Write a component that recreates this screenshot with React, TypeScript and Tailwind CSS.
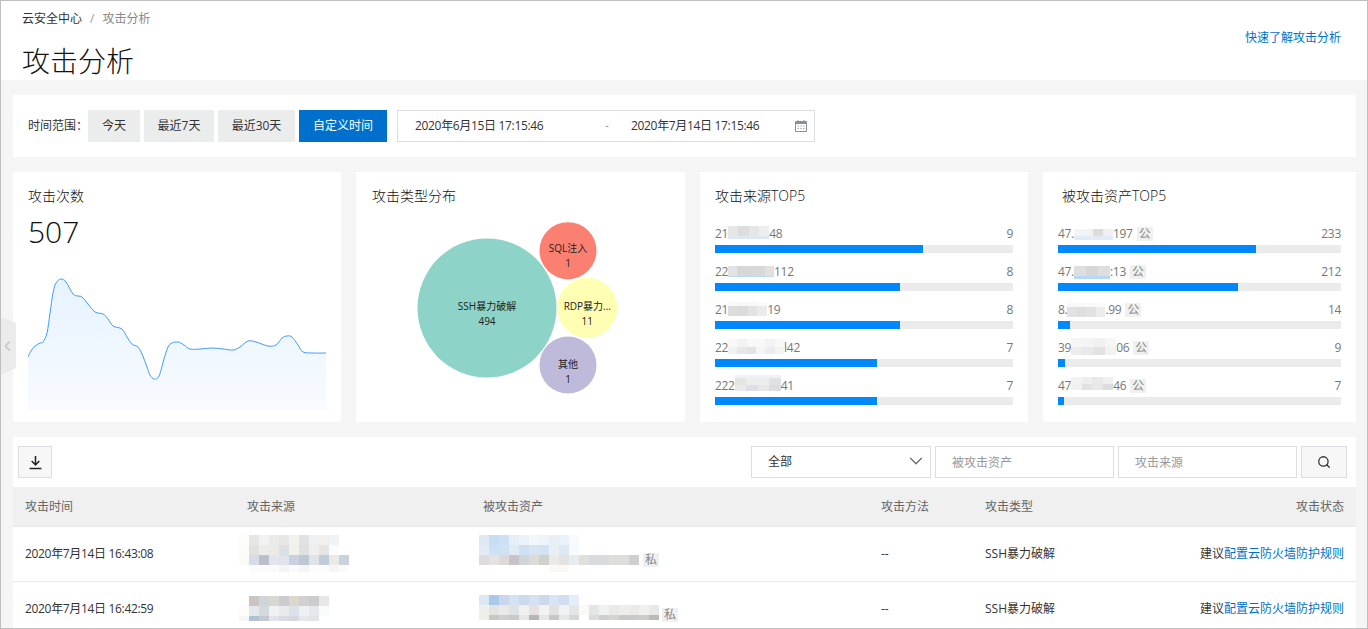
import React from "react";
import { ChevronDown, ChevronLeft, Search } from "lucide-react";

type MosaicRow = { h: number; cells: string[] };

function Mosaic({ rows, w = 10, dy = 0 }: { rows: MosaicRow[]; w?: number; dy?: number }) {
  return (
    <div className="flex flex-col shrink-0" style={{ transform: dy ? `translateY(${dy}px)` : undefined }}>
      {rows.map((r, i) => (
        <div key={i} className="flex">
          {r.cells.map((c, j) => (
            <div key={j} style={{ width: w, height: r.h, backgroundColor: "#" + c }} />
          ))}
        </div>
      ))}
    </div>
  );
}

const Tag = ({ text }: { text: string }) => (
  <span className="inline-flex h-[14px] w-4 shrink-0 items-center justify-center bg-[#f0f0f0] text-xs text-[#888]">{text}</span>
);

const sources = [
  {
    pre: "21", post: "48", n: 9, bar: 208, dy: -2, w: 10.25,
    rows: [
      { h: 10, cells: ["e7e6e6", "dedddd", "e6e6e6", "eeeeee"] },
      { h: 3, cells: ["dce8f4", "dce8f4", "dce8f4", "dce8f4"] },
    ],
  },
  {
    pre: "22", post: "112", n: 8, bar: 185, dy: -1, w: 9.2,
    rows: [
      { h: 10, cells: ["e3e3e3", "d9d7d6", "d6d8da", "dad8d7", "e3e0de"] },
      { h: 1, cells: ["bcdcf6", "bcdcf6", "bcdcf6", "bcdcf6", "bcdcf6"] },
    ],
  },
  {
    pre: "21", post: "19", n: 8, bar: 185, dy: -1, w: 9.75,
    rows: [
      { h: 4, cells: ["f9f9f9", "f6f6f6", "f8f8f8", "fbfbfb"] },
      { h: 10, cells: ["dcdcdc", "dbdbdb", "e2e2e2", "ebebeb"] },
    ],
  },
  {
    pre: "22", post: "l42", n: 7, bar: 162, dy: -2, w: 9.33,
    rows: [
      { h: 8, cells: ["f8f8f8", "f3f3f3", "f8f8f8", "f8f8f8", "f3f3f5", "f8f8f8"] },
      { h: 7, cells: ["f0f1f1", "e9e8e6", "e2e3e8", "f6f5f3", "ebecee", "f3f3f1"] },
    ],
  },
  {
    pre: "222", post: "41", n: 7, bar: 162, dy: -3, w: 11.5,
    rows: [
      { h: 3, cells: ["ecf2f7", "ecf2f7", "ecf2f7", "ecf2f7"] },
      { h: 7, cells: ["e5e5e5", "ebedef", "ededeb", "dfe1e5"] },
      { h: 6, cells: ["e8e9e9", "dfe0e5", "e8e8e6", "dcdcdf"] },
    ],
  },
];

const assets = [
  {
    pre: "47.", post: "197", n: 233, bar: 198, dy: 0, w: 9.75,
    rows: [
      { h: 7, cells: ["f4f4f4", "f2f2f2", "dcdcdc", "f0f0f0"] },
      { h: 4, cells: ["e0ebf7", "e0ebf7", "e0ebf7", "e0ebf7"] },
    ],
  },
  {
    pre: "47.", post: ":13", n: 212, bar: 180, dy: 0, w: 12,
    rows: [
      { h: 10, cells: ["dedede", "d6d6d6", "dedede"] },
      { h: 3, cells: ["b5d8fa", "b5d8fa", "b5d8fa"] },
    ],
  },
  {
    pre: "8.", post: ".99", n: 14, bar: 12, dy: 0, w: 9.5,
    rows: [
      { h: 4, cells: ["f8f8f8", "f9f9f9", "f9f9f9", "fbfbfb"] },
      { h: 10, cells: ["e2e2e2", "dedede", "e2e2e2", "ececec"] },
    ],
  },
  {
    pre: "39", post: "06", n: 9, bar: 7, dy: -2, w: 11.25,
    rows: [
      { h: 9, cells: ["f6f6f6", "f4f4f6", "f1f1f1", "f6f6f6"] },
      { h: 8, cells: ["ececec", "e8e8ea", "e2e2e2", "f2f2f2"] },
    ],
  },
  {
    pre: "47", post: "46", n: 7, bar: 6, dy: -3, w: 10.5,
    rows: [
      { h: 7, cells: ["f3f3f3", "eeeeee", "e8e8e8", "f0f0f0"] },
      { h: 6, cells: ["f0f2f2", "e2e2e2", "e8e8e8", "dcdcdc"] },
    ],
  },
];

const sourceMosaic1: MosaicRow[] = [
  { h: 10, cells: ["fdfdfb", "e5e7e5", "f2f2f2", "ebebe9", "e7e7e6", "f3f2ec", "e1e3e2", "eef0f2", "f1f0ec", "f1f2f5"] },
  { h: 10, cells: ["fcfbf8", "e0e2e2", "ebeded", "eceae6", "dde0e3", "f1f0e9", "dfe1e1", "eeeeee", "e6e5e3", "fbfcfd"] },
  { h: 10, cells: ["fafaf9", "d6dbe7", "b9c0cc", "e3e5ed", "e0e3ec", "c9d1de", "bfc7d3", "e1e3e8", "c0cbdb", "e9e9e6", "c9d2de"] },
  { h: 7, cells: ["ffffff", "fbfbfc", "fbfbfb", "fafafb", "f3f4f6", "fbfbfc", "f4f5f7", "fbfcfc", "fbfcfc", "f5f5f9", "fbfbfb"] },
];
const sourceMosaic2: MosaicRow[] = [
  { h: 10, cells: ["ffffff", "c9c6c2", "d1d4d8", "d9d7d1", "ccccce", "dbd7cc", "d0d0d2", "cccccf", "e7e7e7"] },
  { h: 10, cells: ["fdfdfc", "e3e8ec", "d4d9dd", "f0f1f5", "e9eaee", "dde2ea", "f0f0f4", "e7e8ec", "f9fafc"] },
  { h: 5, cells: ["f7f7f7", "afc2d4", "c3cad4", "e2e3ea", "d9dbe4", "d4d8e1", "e7e7ea", "e4e4e8", "ffffff"] },
];
const assetMosaic1: MosaicRow[] = [
  { h: 10, cells: ["dfe9f5", "c5def2", "cce2f4", "e8eef8", "edf2fa", "f3f6fb", "eef4fb", "e8eff7", "eaf1f9", "f7fbfe"] },
  { h: 10, cells: ["e2eaf4", "cbe1f4", "cfe2f3", "e0e9f4", "cfe0f2", "d7e5f3", "d2e2f2", "e8eff6", "dde8f4", "f7fbfe"] },
  { h: 10, cells: ["dfdadd", "e3e3e1", "dcd9d7", "c9c3c9", "d0d3d7", "dcdbda", "d0d0cc", "eceae6", "e2e4e2", "e9ecec", "e0dfdc", "d9dade", "d9dadc", "dfdedb", "dddddc", "cfcfd1"] },
  { h: 7, cells: ["ffffff", "ffffff", "ffffff", "ffffff", "ffffff", "ffffff", "ffffff", "faf9f6", "faf9f6"] },
];
const assetMosaic2: MosaicRow[] = [
  { h: 10, cells: ["dce7f4", "a8c9e8", "c9d7ec", "d4e2f3", "cbd9ec", "d5e1f3", "cbd9ec", "d7e4f4", "d1ddf0", "e4edf8"] },
  { h: 10, cells: ["eeefed", "e3e3e3", "e9e9e9", "dde2e5", "f0f0f0", "e6e1e1", "f1f2f4", "e3e0e0", "f1f2f4", "e6e7e5", "fafbf8", "e4e6e6", "f0f2f1", "e9e9e7", "eeedeb", "ebeae8", "f0f0ee", "e8e8e8"] },
  { h: 5, cells: ["eeefe6", "c7c7c7", "cfcecc", "cac9c9", "e7e6e6", "b5b5b5", "e4e6ea", "c8c7c7", "e5e7eb", "d6d7d5", "ffffff", "d8dce0", "cfd0ce", "d4d5d3", "c8c9c7", "c9cac8", "ccccca", "b9baba"] },
];

function smooth(pts: [number, number][]) {
  let d = `M${pts[0][0]} ${pts[0][1]}`;
  for (let i = 0; i < pts.length - 1; i++) {
    const p0 = pts[i - 1] || pts[i];
    const p1 = pts[i];
    const p2 = pts[i + 1];
    const p3 = pts[i + 2] || p2;
    const c1x = p1[0] + (p2[0] - p0[0]) / 6;
    const c1y = p1[1] + (p2[1] - p0[1]) / 6;
    const c2x = p2[0] - (p3[0] - p1[0]) / 6;
    const c2y = p2[1] - (p3[1] - p1[1]) / 6;
    d += ` C${c1x.toFixed(1)} ${c1y.toFixed(1)} ${c2x.toFixed(1)} ${c2y.toFixed(1)} ${p2[0]} ${p2[1]}`;
  }
  return d;
}

// trend line, read off the reference
const linePts: [number, number][] = [
  [0, 78], [3, 72], [7, 67], [12, 64], [15, 63], [19, 54], [22, 34], [25, 14], [28, 4], [33, 0], [38, 3], [45, 15], [50, 17], [54, 18],
  [60, 25], [67, 33], [75, 35], [80, 40], [85, 47], [94, 50], [99, 58], [104, 65], [110, 68], [114, 75], [119, 88],
  [122, 96], [126, 100], [131, 97], [136, 80], [140, 68], [144, 64], [150, 63], [156, 66], [162, 70], [172, 70], [185, 69],
  [195, 70], [205, 71], [212, 68], [220, 62], [228, 63], [240, 67], [248, 66], [254, 59], [259, 57], [264, 58], [270, 66], [275, 73],
  [285, 74], [298, 74],
];
const lineD = smooth(linePts);

function TopList({ items, tags = false }: { items: typeof sources; tags?: boolean }) {
  return (
    <div className="mt-[17px] flex flex-col gap-2">
      {items.map((it, i) => (
        <div key={i}>
          <div className="mt-px flex h-5 items-center text-xs text-[#777]">
            <span className="tracking-[-0.3px]">{it.pre}</span>
            <Mosaic rows={it.rows} w={it.w} dy={it.dy} />
            <span className="tracking-[-0.3px]">{it.post}</span>
            {tags && <span className="ml-1 flex"><Tag text="公" /></span>}
            <span className="ml-auto tracking-[-0.3px]">{it.n}</span>
          </div>
          <div className="mt-px h-2 bg-[#ebebeb]">
            <div className="h-2 bg-[#0088ff]" style={{ width: it.bar }} />
          </div>
        </div>
      ))}
    </div>
  );
}

export default function App() {
  return (
    <div className="relative flex h-[629px] w-[1368px] flex-col overflow-hidden border border-[#c0c0c0] bg-[#f5f5f5] font-['Open_Sans','Noto_Sans_CJK_SC',sans-serif] text-[#333]">
      {/* page head */}
      <div className="relative h-[79px] shrink-0 bg-white pl-[21px]">
        <div className="flex h-[35px] items-center text-xs">
          <span className="text-[#333]">云安全中心</span>
          <span className="mx-2 text-[#999]">/</span>
          <span className="text-[#888]">攻击分析</span>
        </div>
        <div className="mt-[7px] text-[28px] font-light leading-[36px] text-[#111]">攻击分析</div>
        <a className="absolute right-[26px] top-[29px] text-xs text-[#0070cc]">快速了解攻击分析</a>
      </div>

      <div className="flex flex-col gap-[15px] pl-3 pr-[11px] pt-[15px]">
        {/* time range */}
        <div className="flex h-[62px] items-center bg-white pl-[15px] text-xs">
          <span className="w-[60px]">时间范围：</span>
          <div className="flex gap-1">
            <button className="h-8 w-[52px] bg-[#ebecec]">今天</button>
            <button className="h-8 w-[70px] bg-[#ebecec]">最近7天</button>
            <button className="h-8 w-[77px] bg-[#ebecec]">最近30天</button>
            <button className="h-8 w-[88px] bg-[#0070cc] text-white">自定义时间</button>
          </div>
          <div className="relative ml-[10px] flex h-8 w-[418px] items-center border border-[#dcdee3] pl-[17px]">
            <span className="w-[190px] tracking-[-0.33px]">2020年6月15日 17:15:46</span>
            <span className="w-[26px] text-[#999]">-</span>
            <span className="tracking-[-0.33px]">2020年7月14日 17:15:46</span>
            <svg className="absolute left-[396px] top-[8px] h-[14px] w-[14px]" viewBox="0 0 14 14" fill="none">
              <path d="M1.5 2.5h11v10h-11z" stroke="#8a8f99" />
              <path d="M1.5 3h11v2h-11z" fill="#8a8f99" />
              <path d="M4 1v2M10 1v2" stroke="#8a8f99" />
              <path d="M3.5 7h1.5M6.3 7h1.5M9 7h1.5M3.5 9.5h1.5M6.3 9.5h1.5M9 9.5h1.5" stroke="#a4a8b0" />
            </svg>
          </div>
        </div>

        {/* summary cards */}
        <div className="flex h-[250px] gap-[15px]">
          <div className="flex w-[328px] flex-col bg-white px-[15px] pt-[14px]">
            <div className="h-5 text-sm font-light leading-5 text-[#111]">攻击次数</div>
            <div className="mt-[6px] h-10 text-[30px] font-light leading-10 text-[#111]">507</div>
            <svg className="h-[158px] w-[298px]" viewBox="0 0 298 158" fill="none">
              <defs>
                <linearGradient id="area" x1="0" y1="0" x2="0" y2="1">
                  <stop offset="0" stopColor="#e6f3ff" />
                  <stop offset="1" stopColor="#f8fbff" />
                </linearGradient>
              </defs>
              <g transform="translate(0 27)">
                <path d={lineD + " L298 131 L0 131 Z"} fill="url(#area)" />
                <path d={lineD} stroke="#3f9cfb" strokeWidth="1" />
              </g>
            </svg>
          </div>

          <div className="flex w-[329px] flex-col bg-white pt-[14px]">
            <div className="h-5 pl-4 text-sm font-light leading-5 text-[#111]">攻击类型分布</div>
            <svg className="h-[216px] w-[329px]" viewBox="0 0 329 216" fontSize="10" textAnchor="middle" fill="#222">
              <circle cx="131" cy="102" r="69.5" fill="#8dd3c7" />
              <circle cx="212" cy="44.7" r="28.5" fill="#fb8072" />
              <circle cx="231.3" cy="101.7" r="30" fill="#ffffb3" />
              <circle cx="212" cy="159" r="28.5" fill="#bebada" />
              <text x="131" y="104">SSH暴力破解</text>
              <text x="131" y="119">494</text>
              <text x="212" y="46">SQL注入</text>
              <text x="212" y="61">1</text>
              <text x="231.3" y="104">RDP暴力...</text>
              <text x="231.3" y="119">11</text>
              <text x="212" y="162">其他</text>
              <text x="212" y="177">1</text>
            </svg>
          </div>

          <div className="w-[328px] bg-white px-[15px] pt-[14px]">
            <div className="h-5 text-sm font-light leading-5 text-[#111]">攻击来源TOP5</div>
            <TopList items={sources} />
          </div>

          <div className="w-[313px] bg-white pl-[15px] pr-[15px] pt-[14px]">
            <div className="h-5 pl-1 text-sm font-light leading-5 text-[#111]">被攻击资产TOP5</div>
            <TopList items={assets} tags />
          </div>
        </div>

        {/* attack list */}
        <div className="bg-white text-xs">
          <div className="flex h-[50px] items-start pl-[5px] pr-[9px] pt-[9px]">
            <button className="flex h-8 w-[34px] items-center justify-center border border-[#dcdee3] bg-[#f7f7f7]">
              <svg className="h-[15px] w-[15px]" viewBox="0 0 14 14" fill="none" stroke="#222" strokeWidth="1.4">
                <path d="M7 1v8M3.4 5.6 7 9.2l3.6-3.6M1.5 12.6h11" />
              </svg>
            </button>
            <div className="relative ml-auto flex h-8 w-[180px] items-center border border-[#dcdee3] pl-4">
              <span>全部</span>
              <ChevronDown className="absolute right-[3px] top-[3px] text-[#666]" size={22} strokeWidth={1.3} />
            </div>
            <input className="ml-1 h-8 w-[179px] border border-[#dcdee3] pl-4 text-xs placeholder:text-[#999]" placeholder="被攻击资产" />
            <input className="ml-1 h-8 w-[179px] border border-[#dcdee3] pl-4 text-xs placeholder:text-[#999]" placeholder="攻击来源" />
            <button className="ml-1 flex h-8 w-[46px] items-center justify-center border border-[#dcdee3] bg-[#f7f7f7]">
              <Search size={14} strokeWidth={2.2} className="text-[#333]" />
            </button>
          </div>
          <table className="w-full table-fixed border-collapse">
            <colgroup>
              <col className="w-[222px]" />
              <col className="w-[236px]" />
              <col className="w-[398px]" />
              <col className="w-[104px]" />
              <col />
            </colgroup>
            <thead>
              <tr className="h-[39px] border-b border-[#e8e8e8] bg-[#f0f0f0] text-[#666]">
                <th className="pl-3 pt-[2px] text-left font-normal">攻击时间</th>
                <th className="pl-3 pt-[2px] text-left font-normal">攻击来源</th>
                <th className="pl-3 pt-[2px] text-left font-normal">被攻击资产</th>
                <th className="pl-3 pt-[2px] text-left font-normal">攻击方法</th>
                <th className="pl-3 pt-[2px] text-left font-normal">攻击类型</th>
                <th className="pr-3 pt-[2px] text-right font-normal">攻击状态</th>
              </tr>
            </thead>
            <tbody>
              <tr className="h-[55px] border-b border-[#e8e8e8]">
                <td className="pl-3 tracking-[-0.33px]">2020年7月14日 16:43:08</td>
                <td className="pl-1"><Mosaic rows={sourceMosaic1} /></td>
                <td className="pl-2">
                  <div className="flex items-start">
                    <Mosaic rows={assetMosaic1} />
                    <span className="ml-1 mt-[18px] flex"><Tag text="私" /></span>
                  </div>
                </td>
                <td className="pl-3">--</td>
                <td className="pl-3">SSH暴力破解</td>
                <td className="pr-3 text-right">建议<a className="text-[#0070cc]">配置云防火墙防护规则</a></td>
              </tr>
              <tr className="h-[55px]">
                <td className="pl-3 tracking-[-0.33px]">2020年7月14日 16:42:59</td>
                <td className="pl-1"><Mosaic rows={sourceMosaic2} /></td>
                <td className="pl-2">
                  <div className="flex items-start">
                    <Mosaic rows={assetMosaic2} />
                    <span className="ml-[3px] mt-[13px] flex"><Tag text="私" /></span>
                  </div>
                </td>
                <td className="pl-3">--</td>
                <td className="pl-3">SSH暴力破解</td>
                <td className="pr-3 text-right">建议<a className="text-[#0070cc]">配置云防火墙防护规则</a></td>
              </tr>
            </tbody>
          </table>
        </div>
      </div>

      {/* side collapse handle */}
      <div className="absolute left-0 top-[316px] flex h-[58px] w-[15px] items-center bg-[#ebebeb] [clip-path:polygon(0_0,100%_10%,100%_88%,0_100%)]">
        <ChevronLeft size={18} strokeWidth={2} className="-ml-[2px] text-[#c4c4c4]" />
      </div>
    </div>
  );
}
